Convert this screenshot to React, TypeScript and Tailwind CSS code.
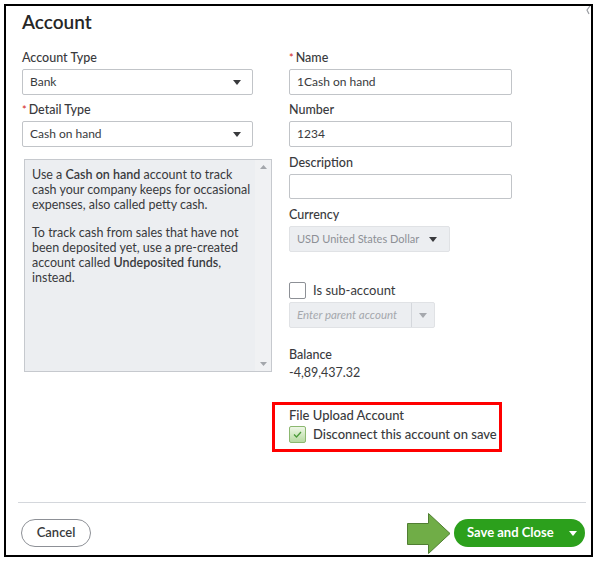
import React from "react";

const Caret = ({ color = "#393a3d" }: { color?: string }) => (
  <svg width="8" height="5" viewBox="0 0 8 5" className="shrink-0">
    <path d="M0 0h8L4 5z" fill={color} />
  </svg>
);

const Label = ({ children, req = false, className = "" }: { children: React.ReactNode; req?: boolean; className?: string }) => (
  <div className={"h-[16px] text-[12.5px] leading-[16px] font-medium text-[#393a3d] whitespace-nowrap " + className}>
    {req && <span className="text-[#d52b1e] mr-[2px] text-[11px]">*</span>}
    {children}
  </div>
);

const Select = ({ value, className = "" }: { value: string; className?: string }) => (
  <div className={"mt-[3px] h-[26px] border border-[#c1c4c8] rounded-[2px] bg-white flex items-center justify-between pl-[7px] pr-[11px] " + className}>
    <span className="text-[12px] text-[#393a3d]">{value}</span>
    <Caret />
  </div>
);

const Input = ({ value = "", h = "h-[26px]" }: { value?: string; h?: string }) => (
  <div className={"mt-[3px] border border-[#c1c4c8] rounded-[2px] bg-white flex items-center pl-[7px] " + h}>
    <span className="text-[12px] text-[#393a3d]">{value}</span>
  </div>
);

export default function App() {
  return (
    <div className="w-[598px] h-[564px] bg-white pt-[4px] pl-[4px] font-[family-name:Lato,sans-serif] text-[#393a3d]">
      <div className="relative w-[589px] h-[553px] border-2 border-black flex flex-col">
        <svg className="absolute right-[0px] top-[0px]" width="5" height="9" viewBox="0 0 5 9">
          <path d="M4 0 L1 4 L3 8" stroke="#9a9da2" strokeWidth="1.2" fill="none" />
        </svg>
        <div className="pt-[4px] pl-[16px] text-[19px] leading-[24px] font-semibold text-[#262626]">Account</div>

        <div className="mt-[16px] pl-[16px] flex gap-[36px]">
          {/* Left column */}
          <div className="w-[231px] flex flex-col">
            <Label>Account Type</Label>
            <Select value="Bank" />
            <Label req className="mt-[7px]">Detail Type</Label>
            <Select value="Cash on hand" />
            <div className="ml-[2px] mt-[12px] w-[248px] h-[213px] border border-[#c6c9ce] bg-[#eceef1] flex">
              <div className="flex-1 pl-[7px] pt-[7px] text-[12.5px] leading-[15px] text-[#393a3d] whitespace-nowrap">
                <p>
                  Use a <b className="font-semibold">Cash on hand</b> account to track
                  <br />
                  cash your company keeps for occasional
                  <br />
                  expenses, also called petty cash.
                </p>
                <p className="mt-[13px]">
                  To track cash from sales that have not
                  <br />
                  been deposited yet, use a pre-created
                  <br />
                  account called <b className="font-semibold">Undeposited funds</b>,
                  <br />
                  instead.
                </p>
              </div>
              <div className="w-[16px] bg-[#f0f1f3] flex flex-col justify-between items-center py-[5px]">
                <svg width="7" height="4" viewBox="0 0 7 4"><path d="M0 4h7L3.5 0z" fill="#a3a6ab" /></svg>
                <svg width="7" height="4" viewBox="0 0 7 4"><path d="M0 0h7L3.5 4z" fill="#a3a6ab" /></svg>
              </div>
            </div>
          </div>

          {/* Right column */}
          <div className="w-[223px] flex flex-col">
            <Label req>Name</Label>
            <Input value="1Cash on hand" />
            <Label className="mt-[7px]">Number</Label>
            <Input value="1234" />
            <Label className="mt-[8px]">Description</Label>
            <Input h="h-[25px]" />
            <Label className="mt-[8px]">Currency</Label>
            <div className="mt-[3px] w-[161px] h-[26px] border border-[#e0e2e5] rounded-[2px] bg-[#eceef1] flex items-center justify-between pl-[7px] pr-[12px]">
              <span className="text-[11px] text-[#8d9096] whitespace-nowrap">USD United States Dollar</span>
              <Caret color="#393a3d" />
            </div>

            <div className="mt-[30px] h-[17px] flex items-center gap-[7px]">
              <div className="w-[17px] h-[17px] border border-[#8d9096] rounded-[2px] bg-white" />
              <span className="text-[13px] text-[#393a3d]">Is sub-account</span>
            </div>
            <div className="mt-[3px] w-[146px] h-[26px] border border-[#e0e2e5] rounded-[2px] bg-[#eceef1] flex">
              <div className="flex-1 flex items-center pl-[7px]">
                <span className="text-[11.5px] italic text-[#a5a8ad] whitespace-nowrap">Enter parent account</span>
              </div>
              <div className="w-[23px] border-l border-[#d4d7dc] flex items-center justify-center">
                <Caret color="#a5a8ad" />
              </div>
            </div>

            <Label className="mt-[19px]">Balance</Label>
            <div className="mt-[2px] h-[16px] text-[12.5px] leading-[16px] text-[#393a3d]">-4,89,437.32</div>

            <div className="mt-[21px] -ml-[17px] w-[230px] h-[50px] border-[3px] border-[#ff0000] pl-[14px] pt-[2px]">
              <div className="h-[16px] text-[13px] leading-[16px] font-medium text-[#393a3d]">File Upload Account</div>
              <div className="mt-[3px] h-[17px] flex items-center gap-[7px]">
                <div className="w-[17px] h-[17px] rounded-[2px] border border-[#8cb870] bg-linear-to-b from-[#eef7e6] to-[#b7daa2] flex items-center justify-center">
                  <svg width="9" height="7" viewBox="0 0 9 7">
                    <path d="M1 3.5 L3.5 6 L8 1" stroke="#4b9a3a" strokeWidth="1.3" fill="none" />
                  </svg>
                </div>
                <span className="text-[13px] font-medium text-[#393a3d]">Disconnect this account on save</span>
              </div>
            </div>
          </div>
        </div>

        {/* Footer */}
        <div className="mt-auto pb-[8px]">
          <div className="ml-[12px] mr-[5px] h-px bg-[#d4d7dc]" />
          <div className="mt-[16px] h-[28px] pl-[15px] pr-[6px] flex items-center justify-between">
            <div className="w-[70px] h-[28px] rounded-full border border-[#8d9096] flex items-center justify-center text-[13px] font-semibold text-[#393a3d]">
              Cancel
            </div>
            <div className="flex items-center">
              <svg width="44" height="41" viewBox="0 0 44 41" className="shrink-0">
                <path d="M0.5 10.5 H21.5 V0.5 L43 20.5 L21.5 40.5 V31.5 H0.5 Z" fill="#70ad47" stroke="#507e32" strokeWidth="1" />
              </svg>
              <div className="ml-[3px] w-[131px] h-[28px] rounded-full bg-[#2ca01c] flex items-center justify-between pl-[13px] pr-[8px]">
                <span className="text-[13px] font-bold text-white">Save and Close</span>
                <Caret color="#ffffff" />
              </div>
            </div>
          </div>
        </div>
      </div>
    </div>
  );
}
